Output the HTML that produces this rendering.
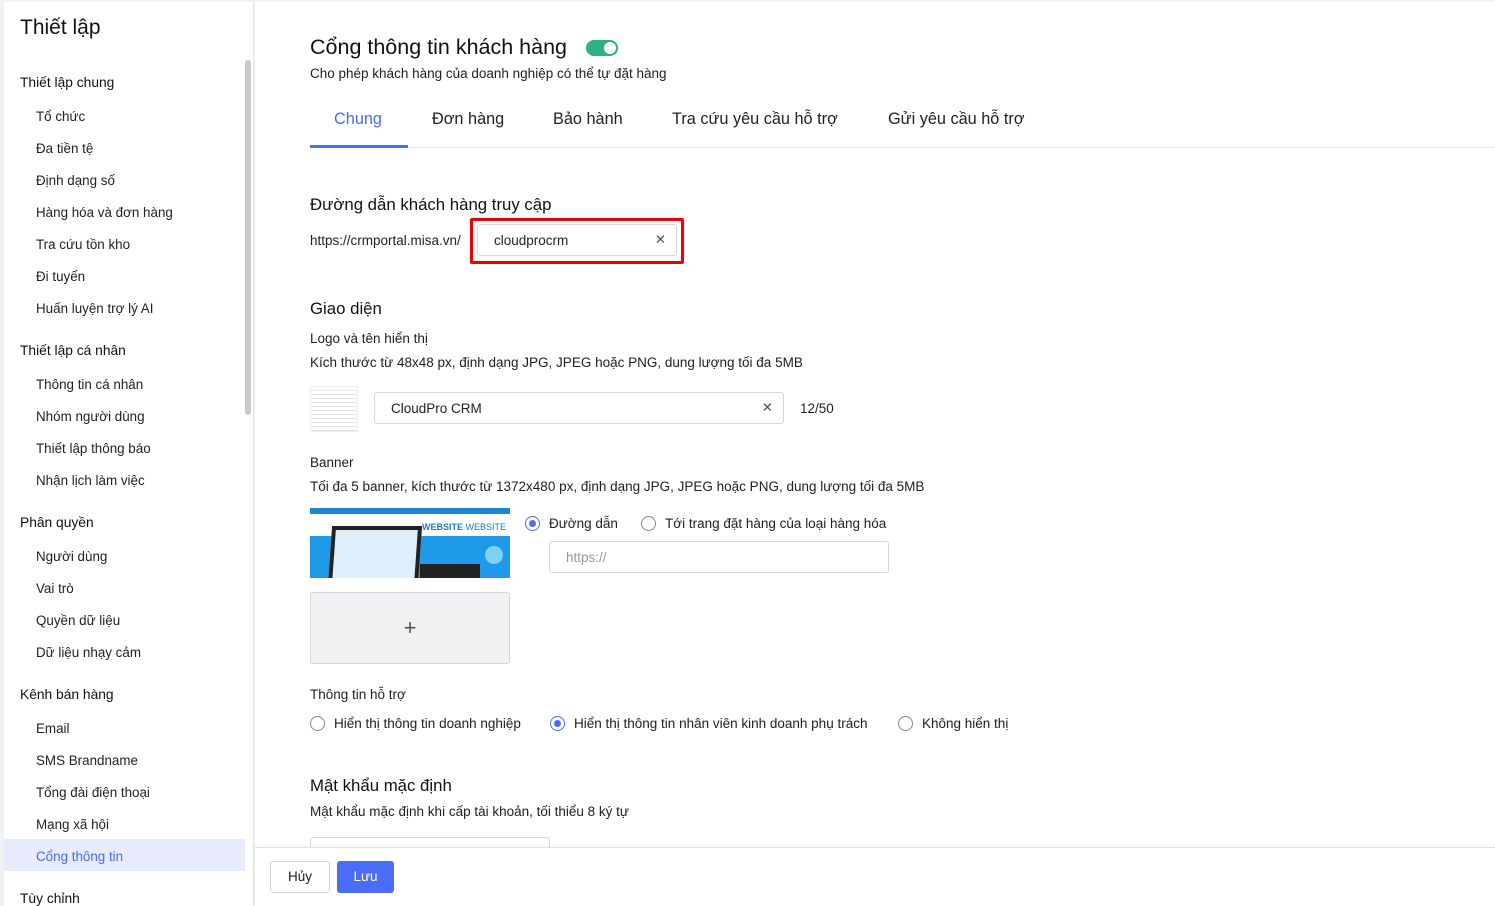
<!DOCTYPE html>
<html><head><meta charset="utf-8"><style>
*{box-sizing:border-box;margin:0;padding:0}
body{width:1495px;height:906px;overflow:hidden;background:#f0f1f3;font-family:"Liberation Sans",sans-serif;color:#212121;position:relative}
.side{position:absolute;left:4px;top:2px;width:250px;height:904px;background:#fff;border-right:1px solid #e3e4e7;overflow:hidden}
.side h1{position:absolute;left:16px;top:14px;font-size:21px;font-weight:normal;color:#111}
.side .g{position:absolute;left:16px;font-size:13.8px;color:#111}
.side .i{position:absolute;left:32px;font-size:13.4px;color:#222}
.side .act{position:absolute;left:0;top:837px;width:241px;height:32px;background:#e8ebfc}
.sb{position:absolute;left:241px;top:58px;width:6px;height:355px;background:#c9cacd;border-radius:3px}
.main{position:absolute;left:255px;top:2px;width:1240px;height:904px;background:#fff}
.a{position:absolute;white-space:nowrap}
.t{font-size:13.5px}
.inp{position:absolute;border:1px solid #d6d8dc;border-radius:3px;background:#fff;font-size:13.5px}
.radio{position:absolute;width:15px;height:15px;border:1px solid #888;border-radius:50%;background:#fff}
.radio.on{border-color:#4a6cf7}
.radio.on::after{content:"";position:absolute;left:3px;top:3px;width:7px;height:7px;border-radius:50%;background:#4a6cf7}
</style></head><body>
<div class="side">
<h1>Thiết lập</h1>
<div class="sb"></div>
<div class="act"></div>
<div class="g" style="top:73px">Thiết lập chung</div>
<div class="i" style="top:107px">Tổ chức</div>
<div class="i" style="top:139px">Đa tiền tệ</div>
<div class="i" style="top:171px">Định dạng số</div>
<div class="i" style="top:203px">Hàng hóa và đơn hàng</div>
<div class="i" style="top:235px">Tra cứu tồn kho</div>
<div class="i" style="top:267px">Đi tuyến</div>
<div class="i" style="top:299px">Huấn luyện trợ lý AI</div>
<div class="g" style="top:341px">Thiết lập cá nhân</div>
<div class="i" style="top:375px">Thông tin cá nhân</div>
<div class="i" style="top:407px">Nhóm người dùng</div>
<div class="i" style="top:439px">Thiết lập thông báo</div>
<div class="i" style="top:471px">Nhận lịch làm việc</div>
<div class="g" style="top:513px">Phân quyền</div>
<div class="i" style="top:547px">Người dùng</div>
<div class="i" style="top:579px">Vai trò</div>
<div class="i" style="top:611px">Quyền dữ liệu</div>
<div class="i" style="top:643px">Dữ liệu nhạy cảm</div>
<div class="g" style="top:685px">Kênh bán hàng</div>
<div class="i" style="top:719px">Email</div>
<div class="i" style="top:751px">SMS Brandname</div>
<div class="i" style="top:783px">Tổng đài điện thoại</div>
<div class="i" style="top:815px">Mạng xã hội</div>
<div class="i" style="top:847px;color:#4a6cf7">Cổng thông tin</div>
<div class="g" style="top:889px">Tùy chỉnh</div>
</div>
<div class="main">
<div class="a" style="left:55px;top:33px;font-size:21.5px;color:#111">Cổng thông tin khách hàng</div>
<div class="a" style="left:331px;top:38px;width:32px;height:16px;border-radius:8px;background:#2db37f"><div style="position:absolute;right:2px;top:2px;width:12px;height:12px;border-radius:50%;background:#fff"></div></div>
<div class="a t" style="left:55px;top:64px">Cho phép khách hàng của doanh nghiệp có thể tự đặt hàng</div>
<div class="a" style="left:55px;top:145px;width:1185px;height:1px;background:#e3e4e7"></div>
<div class="a" style="left:55px;top:143px;width:98px;height:3px;background:#4a6cf7"></div>
<div class="a" style="left:79px;top:108px;font-size:16.3px;color:#4a6cf7">Chung</div>
<div class="a" style="left:177px;top:108px;font-size:16.3px">Đơn hàng</div>
<div class="a" style="left:298px;top:108px;font-size:16.3px">Bảo hành</div>
<div class="a" style="left:417px;top:108px;font-size:16.3px">Tra cứu yêu cầu hỗ trợ</div>
<div class="a" style="left:633px;top:108px;font-size:16.3px">Gửi yêu cầu hỗ trợ</div>
<div class="a" style="left:55px;top:193px;font-size:16.8px;color:#111">Đường dẫn khách hàng truy cập</div>
<div class="a t" style="left:55px;top:231px">https://crmportal.misa.vn/</div>
<div class="a" style="left:215px;top:216px;width:214px;height:46px;border:3px solid #e00;border-radius:2px"></div>
<div class="inp" style="left:222px;top:222px;width:200px;height:32px;padding:8px 16px">cloudprocrm<span style="position:absolute;right:10px;top:7px;color:#555">✕</span></div>
<div class="a" style="left:55px;top:297px;font-size:16.8px;color:#111">Giao diện</div>
<div class="a t" style="left:55px;top:329px">Logo và tên hiển thị</div>
<div class="a t" style="left:55px;top:353px">Kích thước từ 48x48 px, định dạng JPG, JPEG hoặc PNG, dung lượng tối đa 5MB</div>
<div class="a" style="left:55px;top:384px;width:48px;height:46px;background:repeating-linear-gradient(#fff 0 3px,#e6e6ea 3px 4px);border:1px solid #eee"></div>
<div class="inp" style="left:119px;top:390px;width:410px;height:32px;padding:8px 16px">CloudPro CRM<span style="position:absolute;right:10px;top:7px;color:#555">✕</span></div>
<div class="a t" style="left:545px;top:399px">12/50</div>
<div class="a t" style="left:55px;top:453px">Banner</div>
<div class="a t" style="left:55px;top:477px">Tối đa 5 banner, kích thước từ 1372x480 px, định dạng JPG, JPEG hoặc PNG, dung lượng tối đa 5MB</div>
<div class="a" style="left:55px;top:506px;width:200px;height:70px;background:linear-gradient(180deg,#1a86d6 0 6px,#fff 6px 28px,#1e9ae6 28px);overflow:hidden">
<div style="position:absolute;left:20px;top:18px;width:90px;height:60px;background:#dfeefb;border:4px solid #222;transform:skewX(-4deg)"></div>
<div style="position:absolute;left:110px;top:56px;width:60px;height:20px;background:#222"></div>
<div style="position:absolute;left:175px;top:38px;width:18px;height:18px;border-radius:50%;background:#7fd0f5"></div>
<div style="position:absolute;right:4px;top:14px;font-size:9px;font-weight:bold;color:#1a7ad6">WEBSITE <span style="font-weight:normal">WEBSITE</span></div>
</div>
<div class="radio on" style="left:270px;top:514px"></div>
<div class="a t" style="left:294px;top:514px">Đường dẫn</div>
<div class="radio" style="left:386px;top:514px"></div>
<div class="a t" style="left:410px;top:514px">Tới trang đặt hàng của loại hàng hóa</div>
<div class="inp" style="left:294px;top:539px;width:340px;height:32px;padding:8px 16px;color:#999">https://</div>
<div class="a" style="left:55px;top:590px;width:200px;height:72px;background:#f0f1f3;border:1px solid #d6d8dc;border-radius:3px;text-align:center;line-height:70px;font-size:22px;color:#555;font-weight:300">+</div>
<div class="a t" style="left:55px;top:685px">Thông tin hỗ trợ</div>
<div class="radio" style="left:55px;top:714px"></div>
<div class="a t" style="left:79px;top:714px">Hiển thị thông tin doanh nghiệp</div>
<div class="radio on" style="left:295px;top:714px"></div>
<div class="a t" style="left:319px;top:714px">Hiển thị thông tin nhân viên kinh doanh phụ trách</div>
<div class="radio" style="left:643px;top:714px"></div>
<div class="a t" style="left:667px;top:714px">Không hiển thị</div>
<div class="a" style="left:55px;top:774px;font-size:16.8px;color:#111">Mật khẩu mặc định</div>
<div class="a t" style="left:55px;top:802px">Mật khẩu mặc định khi cấp tài khoản, tối thiểu 8 ký tự</div>
<div class="inp" style="left:55px;top:835px;width:240px;height:32px"></div>
<div class="a" style="left:0;top:845px;width:1240px;height:59px;background:#fff;border-top:1px solid #e3e4e7;box-shadow:0 -1px 3px rgba(0,0,0,.05)"></div>
<div class="a" style="left:15px;top:859px;width:60px;height:32px;border:1px solid #d0d2d6;border-radius:3px;font-size:13.5px;text-align:center;line-height:30px;background:#fff">Hủy</div>
<div class="a" style="left:82px;top:859px;width:57px;height:32px;border-radius:3px;font-size:13.5px;text-align:center;line-height:32px;background:#4a6cf7;color:#fff">Lưu</div>
</div>
</body></html>
